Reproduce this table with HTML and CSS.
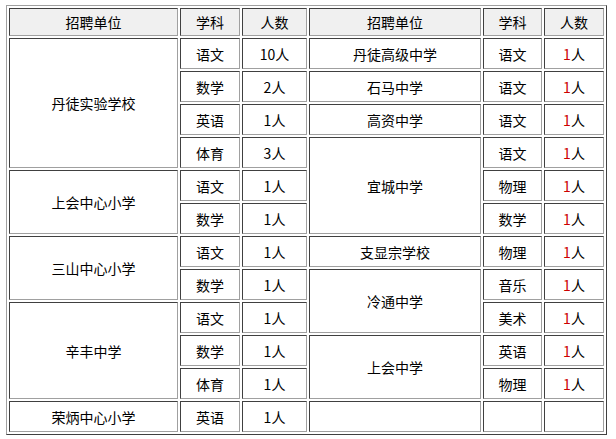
FILE: index.html
```html
<!DOCTYPE html>
<html>
<head>
<meta charset="utf-8">
<link rel="stylesheet" href="styles.css">
</head>
<body>
<table class="jobs">
  <tr class="head">
    <th class="c1">招聘单位</th><th class="c2">学科</th><th class="c3">人数</th>
    <th class="c4">招聘单位</th><th class="c5">学科</th><th class="c6">人数</th>
  </tr>
  <tr>
    <td rowspan="4">丹徒实验学校</td><td>语文</td><td>10人</td>
    <td>丹徒高级中学</td><td>语文</td><td><span class="red">1</span>人</td>
  </tr>
  <tr>
    <td>数学</td><td>2人</td>
    <td>石马中学</td><td>语文</td><td><span class="red">1</span>人</td>
  </tr>
  <tr>
    <td>英语</td><td>1人</td>
    <td>高资中学</td><td>语文</td><td><span class="red">1</span>人</td>
  </tr>
  <tr>
    <td>体育</td><td>3人</td>
    <td rowspan="3">宜城中学</td><td>语文</td><td><span class="red">1</span>人</td>
  </tr>
  <tr>
    <td rowspan="2">上会中心小学</td><td>语文</td><td>1人</td>
    <td>物理</td><td><span class="red">1</span>人</td>
  </tr>
  <tr>
    <td>数学</td><td>1人</td>
    <td>数学</td><td><span class="red">1</span>人</td>
  </tr>
  <tr>
    <td rowspan="2">三山中心小学</td><td>语文</td><td>1人</td>
    <td>支显宗学校</td><td>物理</td><td><span class="red">1</span>人</td>
  </tr>
  <tr>
    <td>数学</td><td>1人</td>
    <td rowspan="2">冷通中学</td><td>音乐</td><td><span class="red">1</span>人</td>
  </tr>
  <tr>
    <td rowspan="3">辛丰中学</td><td>语文</td><td>1人</td>
    <td>美术</td><td><span class="red">1</span>人</td>
  </tr>
  <tr>
    <td>数学</td><td>1人</td>
    <td rowspan="2">上会中学</td><td>英语</td><td><span class="red">1</span>人</td>
  </tr>
  <tr>
    <td>体育</td><td>1人</td>
    <td>物理</td><td><span class="red">1</span>人</td>
  </tr>
  <tr>
    <td>荣炳中心小学</td><td>英语</td><td>1人</td>
    <td></td><td></td><td></td>
  </tr>
</table>
</body>
</html>
```
FILE: styles.css
```css
html, body {
  margin: 0;
  background: #ffffff;
}
body {
  padding: 5px 6px;
  font-family: "Noto Sans CJK SC", "Liberation Sans", sans-serif;
  font-size: 14px;
  color: #000;
}
.jobs {
  border-collapse: separate;
  border-spacing: 2px;
  border-style: solid;
  border-width: 1px;
  border-color: #a0a0a0 #404040 #404040 #a0a0a0;
  background: #ffffff;
}
.jobs th,
.jobs td {
  border-style: solid;
  border-width: 1px;
  border-color: #404040 #a0a0a0 #a0a0a0 #404040;
  text-align: center;
  vertical-align: middle;
  padding: 0;
  font-weight: normal;
  line-height: 16px;
}
.jobs td {
  height: 29px;
}
.head th {
  background: #f0f0f0;
  height: 26px;
}
.c1 { width: 167px; }
.c2 { width: 58px; }
.c3 { width: 63px; }
.c4 { width: 170px; }
.c5 { width: 57px; }
.c6 { width: 58px; }
.red { color: #cc0000; }
```
